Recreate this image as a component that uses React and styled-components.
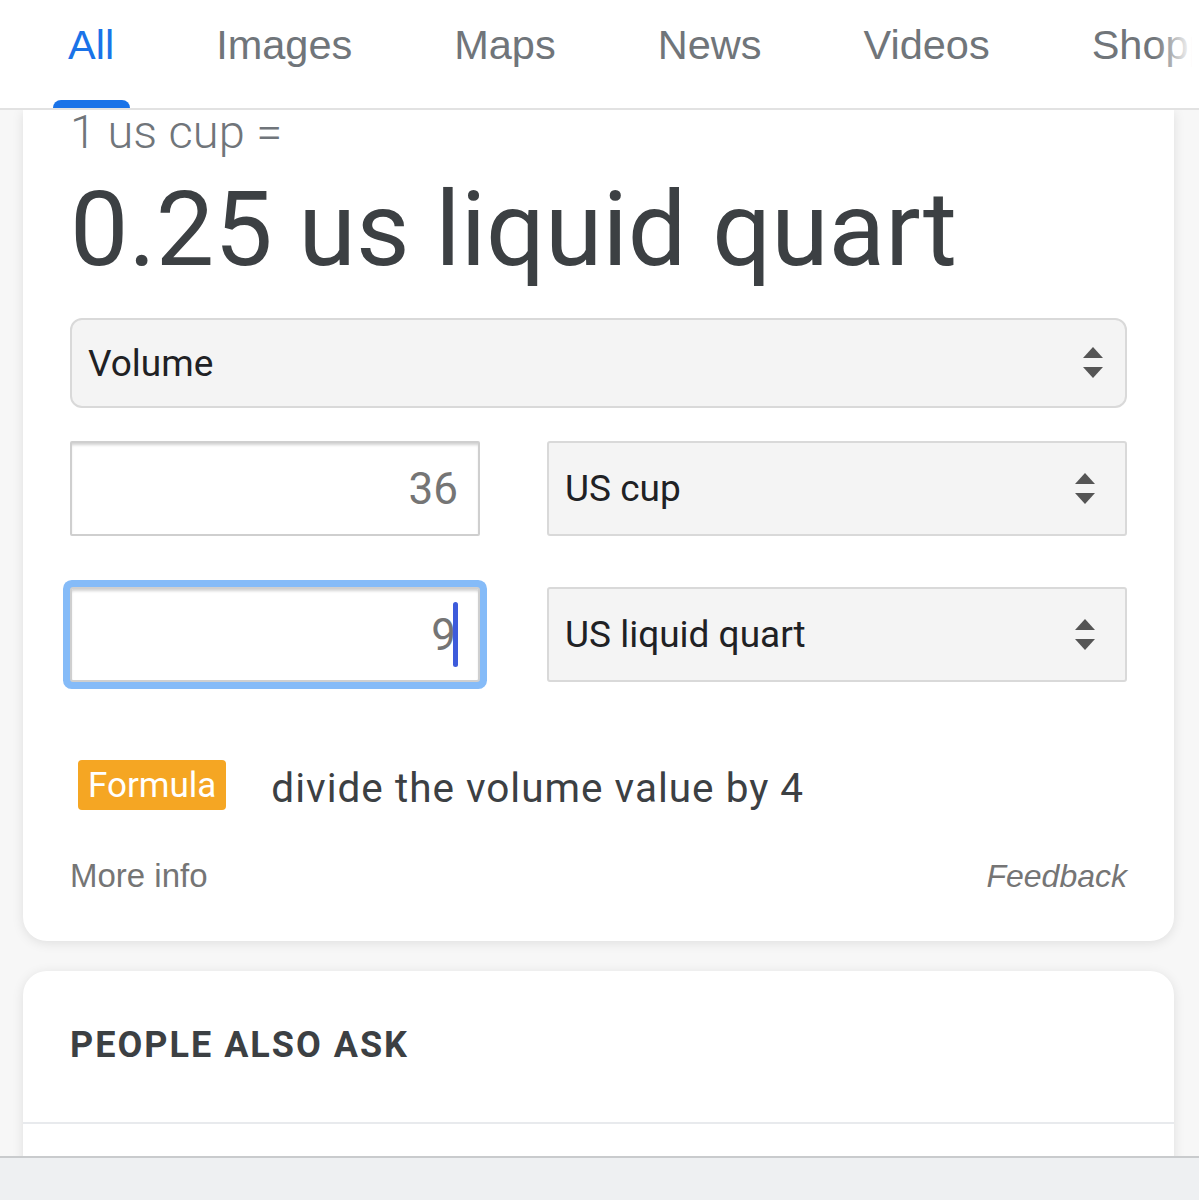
import React from 'react'
import styled, { createGlobalStyle } from 'styled-components'

const GlobalStyle = createGlobalStyle`
  html, body {
    margin: 0;
    padding: 0;
    background: #f7f7f7;
    font-family: Roboto, "Liberation Sans", Arial, sans-serif;
  }
  * {
    box-sizing: border-box;
  }
`

const Header = styled.header`
  position: relative;
  height: 110px;
  background: #fff;
  border-bottom: 2px solid #e2e2e2;
  overflow: hidden;
  &::after {
    content: "";
    position: absolute;
    top: 0;
    right: 0;
    bottom: 0;
    width: 44px;
    background: linear-gradient(to right, rgba(255, 255, 255, 0), #fff 85%);
  }
`
const TabList = styled.nav`
  display: flex;
  padding-left: 17px;
  white-space: nowrap;
`
const Tab = styled.div`
  position: relative;
  flex: none;
  height: 108px;
  padding: 23px 51px 0;
  font-family: "Liberation Sans", Arial, sans-serif;
  font-size: 41.5px;
  line-height: 44px;
  color: ${p => (p.$active ? '#1a73e8' : '#70757a')};
  &::after {
    content: "";
    display: ${p => (p.$active ? 'block' : 'none')};
    position: absolute;
    left: 36px;
    right: 35px;
    bottom: 0;
    height: 8px;
    border-radius: 8px 8px 0 0;
    background: #1a73e8;
  }
`

const Page = styled.main`
  padding: 0 25px 80px 23px;
  display: flex;
  flex-direction: column;
  gap: 30px;
`
const Card = styled.section`
  background: #fff;
  border-radius: 0 0 24px 24px;
  box-shadow: 0 2px 12px rgba(0, 0, 0, 0.1);
  padding: 0 47px 45px;
`
const Query = styled.div`
  font-size: 47px;
  font-weight: 300;
  line-height: 44px;
  color: #70757a;
`
const Result = styled.div`
  margin-top: 16px;
  font-size: 104px;
  line-height: 120px;
  color: #3c4043;
  white-space: nowrap;
`
const SelectBox = styled.div`
  display: flex;
  align-items: center;
  justify-content: space-between;
  height: ${p => p.$height || 95}px;
  padding: 0 ${p => p.$arrowGap || 30}px 0 16px;
  background: #f4f4f4;
  border: 2px solid #d9d9d9;
  border-radius: ${p => p.$radius || 3}px;
  font-size: 37px;
  color: #202124;
`
const CategorySelect = styled(SelectBox)`
  margin-top: 28px;
`
const ConvertRow = styled.div`
  display: grid;
  grid-template-columns: 410px 1fr;
  column-gap: 67px;
  margin-top: ${p => p.$gap}px;
`
const NumberField = styled.div`
  display: flex;
  align-items: center;
  justify-content: flex-end;
  height: 95px;
  padding-right: 20px;
  background: #fff;
  border: 2px solid #cfcfcf;
  border-radius: ${p => (p.$focused ? '3px' : '2px')};
  box-shadow: inset 0 3px 3px -1px rgba(0, 0, 0, 0.18)
    ${p => (p.$focused ? ', 0 0 0 7px #85bbf8' : '')};
  font-size: 44px;
  color: #757575;
`
const Caret = styled.span`
  display: inline-block;
  width: 5px;
  height: 65px;
  margin-left: -3px;
  border-radius: 3px;
  background: #3d5bdb;
`
const FormulaRow = styled.div`
  display: flex;
  align-items: center;
  gap: 45px;
  height: 50px;
  margin-top: 78px;
  padding-left: 8px;
`
const Badge = styled.span`
  display: inline-flex;
  align-items: center;
  height: 50px;
  padding: 0 10px;
  border-radius: 4px;
  background: #f5a623;
  color: #fff;
  font-size: 35px;
`
const FormulaText = styled.span`
  font-size: 40.5px;
  line-height: 44px;
  margin-top: 5px;
  color: #3c4043;
  letter-spacing: 1px;
`
const Footer = styled.div`
  display: flex;
  justify-content: space-between;
  align-items: center;
  height: 40px;
  margin-top: 46px;
  font-family: "Liberation Sans", Arial, sans-serif;
  color: #757575;
`
const MoreLink = styled.span`
  font-size: 33px;
`
const FeedbackLink = styled.span`
  font-size: 32px;
  font-style: italic;
`
const AskCard = styled.section`
  background: #fff;
  border-radius: 24px 24px 0 0;
  box-shadow: 0 2px 12px rgba(0, 0, 0, 0.1);
  min-height: 300px;
`
const AskTitle = styled.h2`
  margin: 0;
  padding: 54px 47px 57px;
  font-size: 36px;
  line-height: 40px;
  font-weight: 700;
  letter-spacing: 2px;
  color: #3c4043;
  border-bottom: 2px solid #e8eaed;
`
const BottomBar = styled.div`
  position: fixed;
  left: 0;
  right: 0;
  bottom: 0;
  height: 44px;
  background: #eef0f2;
  border-top: 2px solid #c9cbcd;
`

function Arrows() {
  return (
    <svg width="20" height="32" viewBox="0 0 20 32" fill="#555">
      <path d="M10 0 L20 11 H0 Z" />
      <path d="M0 20 H20 L10 31 Z" />
    </svg>
  )
}

const tabs = ['All', 'Images', 'Maps', 'News', 'Videos', 'Shopping']

export default function App() {
  return (
    <>
      <GlobalStyle />
      <Header>
        <TabList>
          {tabs.map((t, i) => (
            <Tab key={t} $active={i === 0}>{t}</Tab>
          ))}
        </TabList>
      </Header>
      <Page>
        <Card>
          <Query>1 us cup =</Query>
          <Result>0.25 us liquid quart</Result>
          <CategorySelect $height={90} $radius={12} $arrowGap={22}>
            <span>Volume</span>
            <Arrows />
          </CategorySelect>
          <ConvertRow $gap={33}>
            <NumberField>36</NumberField>
            <SelectBox>
              <span>US cup</span>
              <Arrows />
            </SelectBox>
          </ConvertRow>
          <ConvertRow $gap={51}>
            <NumberField $focused>
              9<Caret />
            </NumberField>
            <SelectBox>
              <span>US liquid quart</span>
              <Arrows />
            </SelectBox>
          </ConvertRow>
          <FormulaRow>
            <Badge>Formula</Badge>
            <FormulaText>divide the volume value by 4</FormulaText>
          </FormulaRow>
          <Footer>
            <MoreLink>More info</MoreLink>
            <FeedbackLink>Feedback</FeedbackLink>
          </Footer>
        </Card>
        <AskCard>
          <AskTitle>PEOPLE ALSO ASK</AskTitle>
        </AskCard>
      </Page>
      <BottomBar />
    </>
  )
}
